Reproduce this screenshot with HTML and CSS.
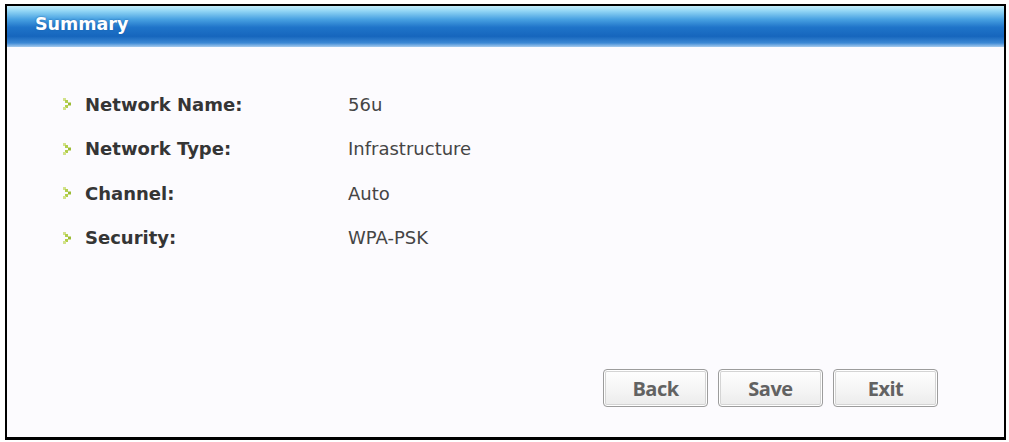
FILE: index.html
```html
<!DOCTYPE html>
<html>
<head>
<meta charset="utf-8">
<link rel="stylesheet" href="styles.css">
</head>
<body>
<div class="frame">
  <div class="header">Summary</div>
  <div class="content">
    <div class="rows">
      <div class="label"><svg class="bullet" width="10" height="12" viewBox="0 0 10 12"><rect x="0" y="0" width="3" height="3" fill="#d2e28a"/><rect x="2" y="2" width="3" height="3" fill="#b3cf4c"/><rect x="5" y="4.5" width="3" height="3" fill="#9cbc34"/><rect x="2" y="7" width="3" height="3" fill="#b3cf4c"/><rect x="0" y="9" width="3" height="3" fill="#d2e28a"/></svg><span>Network Name:</span></div>
      <div class="value">56u</div>
      <div class="label"><svg class="bullet" width="10" height="12" viewBox="0 0 10 12"><rect x="0" y="0" width="3" height="3" fill="#d2e28a"/><rect x="2" y="2" width="3" height="3" fill="#b3cf4c"/><rect x="5" y="4.5" width="3" height="3" fill="#9cbc34"/><rect x="2" y="7" width="3" height="3" fill="#b3cf4c"/><rect x="0" y="9" width="3" height="3" fill="#d2e28a"/></svg><span>Network Type:</span></div>
      <div class="value">Infrastructure</div>
      <div class="label"><svg class="bullet" width="10" height="12" viewBox="0 0 10 12"><rect x="0" y="0" width="3" height="3" fill="#d2e28a"/><rect x="2" y="2" width="3" height="3" fill="#b3cf4c"/><rect x="5" y="4.5" width="3" height="3" fill="#9cbc34"/><rect x="2" y="7" width="3" height="3" fill="#b3cf4c"/><rect x="0" y="9" width="3" height="3" fill="#d2e28a"/></svg><span>Channel:</span></div>
      <div class="value">Auto</div>
      <div class="label"><svg class="bullet" width="10" height="12" viewBox="0 0 10 12"><rect x="0" y="0" width="3" height="3" fill="#d2e28a"/><rect x="2" y="2" width="3" height="3" fill="#b3cf4c"/><rect x="5" y="4.5" width="3" height="3" fill="#9cbc34"/><rect x="2" y="7" width="3" height="3" fill="#b3cf4c"/><rect x="0" y="9" width="3" height="3" fill="#d2e28a"/></svg><span>Security:</span></div>
      <div class="value">WPA-PSK</div>
    </div>
    <div class="buttons">
      <button class="btn">Back</button>
      <button class="btn">Save</button>
      <button class="btn">Exit</button>
    </div>
  </div>
</div>
</body>
</html>
```
FILE: styles.css
```css
html, body {
  margin: 0;
  padding: 0;
  background: #ffffff;
}
body {
  width: 1009px;
  height: 442px;
  overflow: hidden;
}
.frame {
  margin: 4px 3px 0 5px;
  border: 2px solid #000;
  border-bottom-width: 3px;
  height: 431px;
  display: flex;
  flex-direction: column;
  background: #fcfbfe;
}
.header {
  height: 35px;
  padding: 0 0 6px 28px;
  line-height: 37px;
  font-family: "DejaVu Sans", Verdana, sans-serif;
  font-weight: bold;
  font-size: 17.5px;
  color: #ffffff;
  text-shadow: 0 0 2px #1b5fa8;
  background: linear-gradient(to bottom, #c4edfa 0%, #92d6f5 12%, #49a2e2 32%, #1f74c9 52%, #1666bd 74%, #3c88d4 90%, #a6cbee 100%);
}
.content {
  flex: 1;
  display: flex;
  flex-direction: column;
  padding: 35px 66px 30px 56px;
}
.rows {
  display: grid;
  grid-template-columns: 285px auto;
  grid-auto-rows: 44.5px;
  align-items: center;
  font-family: "DejaVu Sans", Verdana, sans-serif;
  font-size: 18px;
}
.label {
  display: flex;
  align-items: center;
  gap: 12px;
  font-weight: bold;
  color: #353535;
}
.bullet {
  flex: none;
}
.value {
  color: #454545;
}
.buttons {
  margin-top: auto;
  display: flex;
  justify-content: flex-end;
  gap: 10px;
}
.btn {
  width: 105px;
  height: 38px;
  padding: 0;
  border: 1px solid #9c9c9c;
  border-radius: 4px;
  box-shadow: inset 0 0 0 1px #ffffff, inset 0 0 0 2px #d4d4d4;
  background: linear-gradient(to bottom, #ffffff 0%, #f6f6f6 50%, #ebebeb 100%);
  font-family: "Open Sans", "Liberation Sans", sans-serif;
  font-weight: 700;
  font-size: 20px;
  letter-spacing: -0.5px;
  color: #626262;
}
```
